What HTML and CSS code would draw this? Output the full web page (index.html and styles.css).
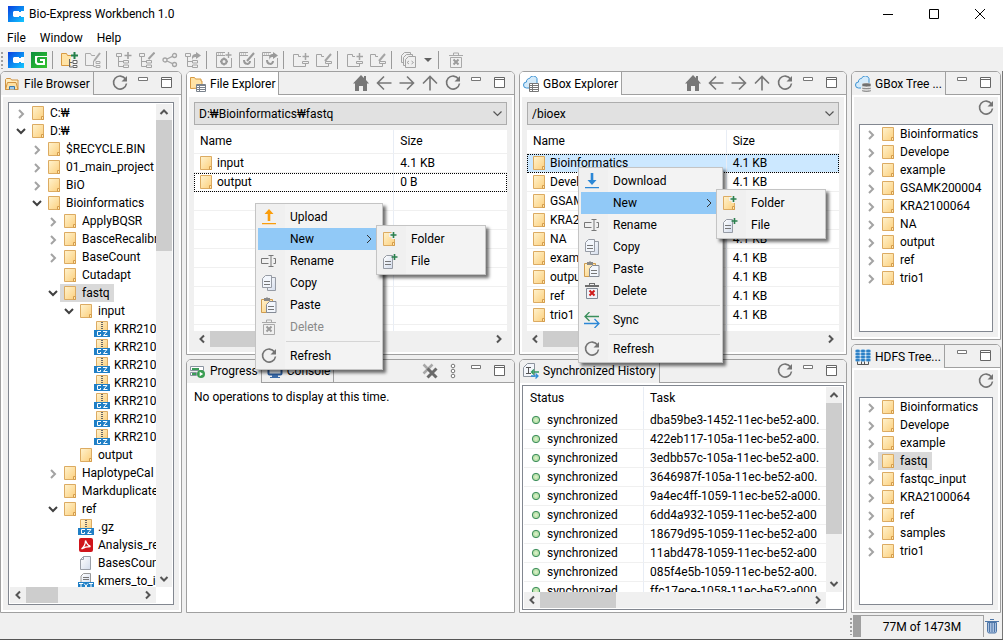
FILE: index.html
```html
<!DOCTYPE html>
<html lang="en">
<head>
<meta charset="utf-8">
<title>Bio-Express Workbench 1.0</title>
<link rel="stylesheet" href="styles.css">
</head>
<body>
<svg class="sprite" aria-hidden="true">
  <defs>
    <linearGradient id="g-fold" x1="0" y1="0" x2="1" y2="1"><stop offset="0" stop-color="#fff3cf"/><stop offset="1" stop-color="#fccf7c"/></linearGradient>
    <linearGradient id="g-blue" x1="0" y1="0" x2="1" y2="1"><stop offset="0" stop-color="#0b3fe0"/><stop offset="0.5" stop-color="#0a86f0"/><stop offset="1" stop-color="#14c8ff"/></linearGradient>
    <linearGradient id="g-green" x1="0" y1="0" x2="1" y2="1"><stop offset="0" stop-color="#0b8f3c"/><stop offset="1" stop-color="#35c52f"/></linearGradient>
    <linearGradient id="g-page" x1="0" y1="0" x2="1" y2="1"><stop offset="0" stop-color="#ffffff"/><stop offset="1" stop-color="#d3dcec"/></linearGradient>
    <radialGradient id="g-dot"><stop offset="0" stop-color="#e4f5d0"/><stop offset="1" stop-color="#9fd394"/></radialGradient>
  </defs>
  <symbol id="i-c" viewBox="0 0 16 16"><path fill="#fff" d="M0 0h16v16H0z"/><path fill="url(#g-blue)" d="M0 0h16v5h-3v1h-2V5H6L5 6v4l1 1h5v-1h2v1h3v5H0z"/></symbol>
  <symbol id="i-g" viewBox="0 0 16 16"><path fill="url(#g-green)" d="M0 0h16v16H0z"/><path fill="#fff" d="M4 4h12v1H7L6 6v4l1 1h5V9H9V7h5v6H6l-2-2z"/></symbol>
  <symbol id="i-folder" viewBox="0 0 16 16"><path fill="url(#g-fold)" stroke="#dcab62" d="M2.500 1.500h11v13h-11z"/><path fill="#ffe6ae" stroke="#d49c4c" d="M11.500 11.500h2v3h-2z"/></symbol>
  <symbol id="i-gz" viewBox="0 0 16 16"><path fill="url(#g-fold)" stroke="#dcab62" d="M2.500.5h11v10h-11z"/><path stroke="#666" stroke-width="2" stroke-dasharray="1 1" d="M8 1v8"/><path fill="#1f7fc6" d="M0 9h16v7H0z"/><path fill="none" stroke="#fff" d="M7 10.500H3.500v4H6.500V13M9 10.500h4l-3.500 4h4"/></symbol>
  <symbol id="i-txt" viewBox="0 0 16 16"><path fill="url(#g-page)" stroke="#999" d="M5.500.5h7v12h-9.500v-9.500z"/><path stroke="#777" d="M5 4.500h6M5 6.500h6"/><path fill="#1f7fc6" d="M0 9h16v7H0z"/><path fill="none" stroke="#fff" d="M1 10.500h4M3 10.500v5M6 10.500l4 5M10 10.500l-4 5M11 10.500h4M13 10.500v5"/></symbol>
  <symbol id="i-pdf" viewBox="0 0 16 16"><rect x="1" y="1" width="14" height="14" rx="2" fill="#d0151b"/><path fill="none" stroke="#fff" stroke-width="1.300" d="M7.500 3.500c1.500 4 2.500 5 5 6-3 0-6 .5-9 2.500 2.500-2 4-5 4-8.500z"/></symbol>
  <symbol id="i-doc" viewBox="0 0 16 16"><path fill="url(#g-page)" stroke="#9a9fa8" d="M5.500 1.500h7v13h-10v-10z"/><path fill="none" stroke="#9a9fa8" d="M5.500 1.500v3h-3"/></symbol>
  <symbol id="i-right" viewBox="0 0 16 16"><path fill="none" stroke="#a3a3a3" stroke-width="2" d="M7 5l4 4-4 4"/></symbol>
  <symbol id="i-down" viewBox="0 0 16 16"><path fill="none" stroke="#404040" stroke-width="2" d="M5 6l4 4 4-4"/></symbol>
  <symbol id="i-browser" viewBox="0 0 16 16"><path fill="#ffedc0" stroke="#cf9240" d="M1.500 13.500v-10l1-1h4l1 1.500h6.500v9.500z"/><path fill="#ffe0a0" stroke="#cf9240" d="M1.500 13.500l2-7H12l2 7z"/><path fill="#9cc8ec" stroke="#3c78a8" d="M5.500 13.500v-3h5v3"/></symbol>
  <symbol id="i-explorer" viewBox="0 0 16 16"><path fill="#ffe3a6" stroke="#d89a42" d="M.5 12.500v-11h4l1 1.500h5.500v2h1v7z"/><path fill="#fff" stroke="#7a828c" d="M6.500 8.500h9v7h-9z"/><path stroke="#7a828c" d="M6 9.500h10M6 11.500h10M6 13.500h10M9.500 8v8"/></symbol>
  <symbol id="i-cloud" viewBox="0 0 16 16"><path fill="#d4ebfb" stroke="#3d92d2" d="M6 12H3.500a3 3 0 0 1 0-6 3 3 0 0 1 3-3.500 4 4 0 0 1 7.500 0v5"/></symbol>
  <symbol id="i-cloudgrid" viewBox="0 0 16 16"><use href="#i-cloud"/><path fill="#fff" stroke="#777" d="M6.500 7.500h9v8h-9z"/><path stroke="#777" d="M6 9.500h10M6 11.500h10M6 13.500h10M9.500 8v8"/></symbol>
  <symbol id="i-clouddb" viewBox="0 0 16 16"><use href="#i-cloud"/><path fill="#707070" stroke="#eee" stroke-width=".6" d="M7 8c0-1.400 9-1.400 9 0v2c0 1.200-9 1.200-9 0zM7 11c0 1.200 9 1.200 9 0v1.500c0 1.300-9 1.300-9 0zM7 13.500c0 1.200 9 1.200 9 0V15c0 1.300-9 1.300-9 0z"/></symbol>
  <symbol id="i-hdfs" viewBox="0 0 16 16"><g fill="#2c7fc4" stroke="#8fc3ec" stroke-width=".5"><ellipse cx="2.700" cy="2" rx="2.500" ry="1.600"/><ellipse cx="8" cy="2" rx="2.500" ry="1.600"/><ellipse cx="13.300" cy="2" rx="2.500" ry="1.600"/><ellipse cx="2.700" cy="5" rx="2.500" ry="1.600"/><ellipse cx="8" cy="5" rx="2.500" ry="1.600"/><ellipse cx="13.300" cy="5" rx="2.500" ry="1.600"/><ellipse cx="2.700" cy="8" rx="2.500" ry="1.600"/><ellipse cx="8" cy="8" rx="2.500" ry="1.600"/><ellipse cx="13.300" cy="8" rx="2.500" ry="1.600"/><ellipse cx="2.700" cy="11" rx="2.500" ry="1.600"/><ellipse cx="8" cy="11" rx="2.500" ry="1.600"/><ellipse cx="13.300" cy="11" rx="2.500" ry="1.600"/></g><path fill="none" stroke="#555" d="M2.500 12.500v3h11v-3M6.500 12.500v3M9.500 12.500v3"/></symbol>
  <symbol id="i-history" viewBox="0 0 16 16"><path fill="#f3f6fb" stroke="#8b929c" d="M4.500.5h7v13h-11V4.500z"/><path fill="none" stroke="#555" d="M3 4.500h5M5.500 5v5M3 10.500h5"/><path fill="none" stroke="#2f9a60" stroke-width="1.300" d="M16 9H8.500M11 6.500L8.500 9 11 11.500"/><path fill="none" stroke="#2f8fd8" stroke-width="1.300" d="M8 13h7M12.500 10.500L15 13l-2.500 2.500"/></symbol>
  <symbol id="i-progress" viewBox="0 0 16 16"><path fill="#fff" stroke="#8a94a0" d="M.5 3.500h13v4H.5zM.5 9.500h6v3h-6z"/><path fill="#3d9c5a" d="M2 5h7v2H2zM2 10h4v2H2z"/><circle cx="11" cy="11" r="4" fill="#3a9d52"/><path fill="#fff" d="M9.700 8.800l3.500 2.200-3.500 2.200z"/></symbol>
  <symbol id="i-console" viewBox="0 0 16 16"><rect x="1.500" y="2.500" width="13" height="9" rx="1" fill="#e8f1fb" stroke="#2c5c9c" stroke-width="2"/><path fill="#3b6ba8" d="M5 12h6v2H5zM3 14h10v1H3z"/></symbol>
  <symbol id="i-refresh" viewBox="0 0 16 16"><path fill="none" stroke="#747474" stroke-width="1.600" d="M13.500 4A6.500 6.500 0 1 0 14.500 8.500"/><path fill="#747474" d="M15 1v5.500H9.500z"/></symbol>
  <symbol id="i-min" viewBox="0 0 16 16"><path fill="#fff" stroke="#777" d="M3.500 2.500h9v3h-9z"/></symbol>
  <symbol id="i-max" viewBox="0 0 16 16"><path fill="#fff" stroke="#666" d="M3.500 2.500h10v10h-10zM3 4.500h11"/></symbol>
  <symbol id="i-home" viewBox="0 0 16 16"><path fill="#777" d="M8 0l3 3V1h2v4l3 3.500h-2V16h-4v-5H6v5H2V8.500H0z"/></symbol>
  <symbol id="i-aleft" viewBox="0 0 16 16"><path fill="none" stroke="#777" stroke-width="1.600" d="M15.500 8H1.500M8 1.500L1.500 8 8 14.500"/></symbol>
  <symbol id="i-aright" viewBox="0 0 16 16"><path fill="none" stroke="#777" stroke-width="1.600" d="M.5 8h14M8 1.500L14.500 8 8 14.500"/></symbol>
  <symbol id="i-aup" viewBox="0 0 16 16"><path fill="none" stroke="#777" stroke-width="1.600" d="M8 15.500v-14M1 8.500l7-7 7 7"/></symbol>
  <symbol id="i-clear" viewBox="0 0 16 16"><path stroke="#a8a8a8" stroke-width="2.500" d="M1.500 1.500l9 9M10.500 1.500l-9 9"/><path stroke="#6a6a6a" stroke-width="3" d="M5.500 5.500l9 9M14.500 5.500l-9 9"/></symbol>
  <symbol id="i-dots" viewBox="0 0 16 16"><g fill="#fff" stroke="#777"><circle cx="8" cy="3" r="1.800"/><circle cx="8" cy="8" r="1.800"/><circle cx="8" cy="13" r="1.800"/></g></symbol>
  <symbol id="i-upload" viewBox="0 0 16 16"><path fill="#fa9d0c" d="M8 0l4.500 5H9.300v7H6.700V5H3.500zM1 14h14v1.200H1z"/></symbol>
  <symbol id="i-download" viewBox="0 0 16 16"><path fill="#2b87d6" d="M8 12L3.500 7h3.200V0h2.600v7h3.200zM1 14h14v1.200H1z"/></symbol>
  <symbol id="i-rename" viewBox="0 0 16 16"><path fill="none" stroke="#777" d="M7.500 5.500h-7v5h7M12.500 5.500h2v5h-2M10 2.500v11M7.500 2.500h5M7.500 13.500h5"/></symbol>
  <symbol id="i-copy" viewBox="0 0 16 16"><path fill="url(#g-page)" stroke="#969ba4" d="M6.500 2.500h8v13h-8z"/><path fill="#f2f6fc" stroke="#969ba4" d="M4.500.5h6v12h-9v-9z"/><path stroke="#777" d="M3 6.500h6M3 9.500h6"/></symbol>
  <symbol id="i-paste" viewBox="0 0 16 16"><path fill="url(#g-fold)" stroke="#cf9c4f" d="M.5 2.500h11v13H.5z"/><path fill="#888" d="M3 1h2l1-1 1 1h2v3H3z"/><path fill="#f2f6fc" stroke="#858b96" d="M8.500 4.500h6.500v11H5.500v-8z"/><path stroke="#777" d="M7 9.500h6M7 12.500h6"/></symbol>
  <symbol id="i-bin" viewBox="0 0 16 16"><path fill="#f0f3f8" stroke="#818995" d="M2.500 5.500h11v10h-11z"/><path fill="#6e6e6e" d="M1 2h4V0h6v2h4v2H1zM6 1v1h4V1z" fill-rule="evenodd"/></symbol>
  <symbol id="i-delete" viewBox="0 0 16 16"><use href="#i-bin"/><path stroke="#d01c1c" stroke-width="2" d="M5.500 7.500l5 5M10.500 7.500l-5 5"/></symbol>
  <symbol id="i-deleteoff" viewBox="0 0 16 16"><path fill="none" stroke="#a9a9a9" d="M2.500 5.500h11v10h-11zM1 3.500h14M5.500 3V1h5v2"/><path stroke="#9b9b9b" stroke-width="2" d="M5.500 7.500l5 5M10.500 7.500l-5 5"/></symbol>
  <symbol id="i-sync" viewBox="0 0 16 16"><path fill="none" stroke="#3b8f5c" stroke-width="1.300" d="M15 4.500H1M5.500 0L1 4.500 5.500 9"/><path fill="none" stroke="#2b87d6" stroke-width="1.300" d="M0 11.500h15M10.500 7L15 11.500 10.500 16"/></symbol>
  <symbol id="i-newfolder" viewBox="0 0 16 16"><path fill="url(#g-fold)" stroke="#dcab62" d="M1.500 1.500h11v13h-11z"/><path fill="#ffe6ae" stroke="#d49c4c" d="M10.500 11.500h2v3h-2z"/><path stroke="#f0f0f0" stroke-width="4" d="M11.500 0v8M7 4h9"/><path stroke="#2a7f4d" stroke-width="1.600" d="M11.500 1v6M8.500 4h6"/></symbol>
  <symbol id="i-newfile" viewBox="0 0 16 16"><path fill="url(#g-page)" stroke="#969ba4" d="M4.500 2.500h6v13h-9v-10z"/><path stroke="#777" d="M3 8.500h6M3 11.500h6"/><path stroke="#2a7f4d" stroke-width="1.600" d="M12.500 1v6M9.500 4h6"/></symbol>
  <symbol id="t-newproj" viewBox="0 0 18 18"><path fill="#ffe3a6" stroke="#d89a42" d="M.5 14.500v-12h5l1 2H11M.5 14.500h9"/><path fill="#ffe3a6" stroke="none" d="M1 5h9v9H1z"/><path stroke="#24804a" stroke-width="2" d="M13.500 1v7M10 4.500h7"/><path fill="none" stroke="#666" d="M8.500 8v8h3M8.500 11.500h3"/><path fill="#fff" stroke="#666" d="M12 9.500h4v3h-4zM12 14.500h4v2h-4z"/></symbol>
  <symbol id="t-editproj" viewBox="0 0 18 18"><g fill="none" stroke="#aaa"><path d="M9 14.500H1.500v-12h5l1 2H11"/><path stroke-width="2" d="M16 2l-6 8"/><path d="M12 10.500h4v2h-4zM12 14.500h4v2h-4zM9.500 10v5.500h2"/></g></symbol>
  <symbol id="t-tree" viewBox="0 0 16 16"><g fill="none" stroke="#a4a4a4"><path d="M.5 1.500h5v3h-5zM2.500 5v9.500h5M2.500 9.500h5M7.500 8.500h5v2.500h-5zM7.500 13h5v2.500h-5z"/></g></symbol>
  <symbol id="t-treeadd" viewBox="0 0 16 16"><use href="#t-tree"/><path stroke="#a0a0a0" stroke-width="1.600" d="M12 0v7M8.500 3.500h7"/></symbol>
  <symbol id="t-treeedit" viewBox="0 0 16 16"><use href="#t-tree"/><path stroke="#a0a0a0" stroke-width="2" d="M15.500.5l-6 6.500"/></symbol>
  <symbol id="t-treerun" viewBox="0 0 16 16"><use href="#t-tree"/><path fill="#a0a0a0" d="M11 0l5 3.500L11 7V5C8 5 7.500 6 7.500 8 6 4 8 2 11 2z"/></symbol>
  <symbol id="t-share" viewBox="0 0 16 16"><g fill="none" stroke="#a4a4a4" stroke-width="1.300"><circle cx="3" cy="8" r="2"/><circle cx="12.500" cy="3.500" r="2"/><circle cx="12.500" cy="12.500" r="2"/><path d="M5 7l6-2.800M5 9l6 2.800"/></g></symbol>
  <symbol id="t-win" viewBox="0 0 16 16"><path fill="none" stroke="#a4a4a4" d="M9 .5H.5v15h15V6M0 3.500h9"/><path stroke="#a4a4a4" stroke-dasharray="1 1" d="M2 2h5"/></symbol>
  <symbol id="t-winadd" viewBox="0 0 16 16"><use href="#t-win"/><path stroke="#a4a4a4" stroke-width="1.300" d="M12.500 0v6M9.500 3h6"/><circle cx="8" cy="9.500" r="2.500" fill="none" stroke="#999" stroke-width="2"/><path stroke="#999" stroke-width="1.500" d="M8 5.500v1.500M8 12v1.500M4 9.500h1.500M10.500 9.500H12"/></symbol>
  <symbol id="t-winedit" viewBox="0 0 16 16"><use href="#t-win"/><path stroke="#999" stroke-width="2" d="M15 1L8 9"/><path fill="none" stroke="#999" stroke-width="2" d="M5 8c0 5 6 5 6 1"/></symbol>
  <symbol id="t-winrun" viewBox="0 0 16 16"><use href="#t-win"/><path fill="#999" d="M11 0l5 3.500L11 7V5C8 5 8 6 8 8 6 4 8 2 11 2z"/><path fill="none" stroke="#999" stroke-width="2" d="M5 8c0 5 6 5 6 1"/></symbol>
  <symbol id="t-fold" viewBox="0 0 16 16"><path fill="none" stroke="#a4a4a4" d="M8 4.500H5.500v-2h-5v12h12V12M9.500 9.500h6v2h-6z"/></symbol>
  <symbol id="t-foldadd" viewBox="0 0 16 16"><use href="#t-fold"/><path stroke="#a4a4a4" stroke-width="1.500" d="M12.500 1v7M9.500 4.500h6.500"/></symbol>
  <symbol id="t-foldedit" viewBox="0 0 16 16"><use href="#t-fold"/><path stroke="#a4a4a4" stroke-width="2" d="M15 2L9 9"/></symbol>
  <symbol id="t-codes" viewBox="0 0 16 16"><g fill="#efefef" stroke="#a4a4a4"><path d="M3.500.5h6v10h-9v-7z"/><path d="M5.500 2.500h6v11h-9v-8z"/><path d="M7.500 4.500h7v11h-10v-8z"/></g><path fill="none" stroke="#a4a4a4" d="M8 9l-2 1.500 2 1.500M10.500 9l2 1.500-2 1.500"/></symbol>
  <symbol id="i-gc" viewBox="0 0 16 16"><path fill="#a9c0df" stroke="#4f77a8" d="M3.500 4.500h9v9l-1 1.500h-7l-1-1.500z"/><path stroke="#4f77a8" d="M1 3.500h14M6 1.500h4M5.500 5v9M8 5v9M10.500 5v9"/></symbol>
  <symbol id="i-ok" viewBox="0 0 16 16"><circle cx="8" cy="8" r="3.700" fill="url(#g-dot)" stroke="#3f8f5f"/></symbol>
  <symbol id="s-l" viewBox="0 0 16 16"><path fill="none" stroke="#555" stroke-width="2" d="M10 4.500L6.500 8l3.500 3.500"/></symbol>
  <symbol id="s-r" viewBox="0 0 16 16"><path fill="none" stroke="#555" stroke-width="2" d="M6 4.500L9.500 8 6 11.500"/></symbol>
  <symbol id="s-u" viewBox="0 0 16 16"><path fill="none" stroke="#555" stroke-width="2" d="M4.500 10L8 6.500l3.500 3.500"/></symbol>
  <symbol id="s-d" viewBox="0 0 16 16"><path fill="none" stroke="#555" stroke-width="2" d="M4.500 6L8 9.500 11.500 6"/></symbol>
</svg>

<header class="titlebar">
  <svg class="icon"><use href="#i-c"/></svg>
  <h1 class="title">Bio-Express Workbench 1.0</h1>
  <button class="win" aria-label="Minimize"><svg viewBox="0 0 12 12"><path d="M1 6.500h10"/></svg></button>
  <button class="win" aria-label="Maximize"><svg viewBox="0 0 12 12"><path d="M1.500 1.500h9v9h-9z"/></svg></button>
  <button class="win" aria-label="Close"><svg viewBox="0 0 12 12"><path d="M1 1l10 10M11 1L1 11"/></svg></button>
</header>
<nav class="menubar"><button>File</button><button>Window</button><button>Help</button></nav>
<div class="toolbar" role="toolbar">
  <span class="grip"></span>
  <button aria-label="CLOSHA"><svg><use href="#i-c"/></svg></button>
  <button aria-label="GBox"><svg><use href="#i-g"/></svg></button>
  <span class="sep"></span>
  <button class="big" aria-label="New project"><svg><use href="#t-newproj"/></svg></button>
  <button class="big" aria-label="Edit project"><svg><use href="#t-editproj"/></svg></button>
  <span class="sep"></span>
  <button aria-label="New pipeline"><svg><use href="#t-treeadd"/></svg></button>
  <button aria-label="Edit pipeline"><svg><use href="#t-treeedit"/></svg></button>
  <button aria-label="Share"><svg><use href="#t-share"/></svg></button>
  <button aria-label="Run pipeline"><svg><use href="#t-treerun"/></svg></button>
  <span class="sep"></span>
  <button aria-label="New program"><svg><use href="#t-winadd"/></svg></button>
  <button aria-label="Edit program"><svg><use href="#t-winedit"/></svg></button>
  <button aria-label="Export program"><svg><use href="#t-winrun"/></svg></button>
  <span class="sep"></span>
  <button aria-label="New category"><svg><use href="#t-foldadd"/></svg></button>
  <button aria-label="Edit category"><svg><use href="#t-foldedit"/></svg></button>
  <span class="sep"></span>
  <button aria-label="New group"><svg><use href="#t-foldadd"/></svg></button>
  <button aria-label="Edit group"><svg><use href="#t-foldedit"/></svg></button>
  <span class="sep"></span>
  <button aria-label="Scripts"><svg><use href="#t-codes"/></svg></button>
  <button class="drop" aria-label="More scripts"><svg viewBox="0 0 8 4"><path fill="#606060" d="M0 0h8L4 4z"/></svg></button>
  <span class="sep"></span>
  <button aria-label="Delete"><svg><use href="#i-deleteoff"/></svg></button>
</div>

<main class="workspace">
  <div class="column">
    <section class="panel">
      <header class="bar">
        <div class="tab"><svg class="icon"><use href="#i-browser"/></svg>File Browser</div>
        <div class="tools"><button aria-label="Refresh"><svg><use href="#i-refresh"/></svg></button><button aria-label="Minimize"><svg><use href="#i-min"/></svg></button><button aria-label="Maximize"><svg><use href="#i-max"/></svg></button></div>
      </header>
      <div class="body">
        <div class="frame scroller">
          <ul class="tree">
            <li><div class="row"><svg class="tog"><use href="#i-right"/></svg><span class="node"><svg class="icon"><use href="#i-folder"/></svg>C:₩</span></div></li>
            <li><div class="row"><svg class="tog"><use href="#i-down"/></svg><span class="node"><svg class="icon"><use href="#i-folder"/></svg>D:₩</span></div>
              <ul>
                <li><div class="row"><svg class="tog"><use href="#i-right"/></svg><span class="node"><svg class="icon"><use href="#i-folder"/></svg>$RECYCLE.BIN</span></div></li>
                <li><div class="row"><svg class="tog"><use href="#i-right"/></svg><span class="node"><svg class="icon"><use href="#i-folder"/></svg>01_main_project</span></div></li>
                <li><div class="row"><svg class="tog"><use href="#i-right"/></svg><span class="node"><svg class="icon"><use href="#i-folder"/></svg>BiO</span></div></li>
                <li><div class="row"><svg class="tog"><use href="#i-down"/></svg><span class="node"><svg class="icon"><use href="#i-folder"/></svg>Bioinformatics</span></div>
                  <ul>
                    <li><div class="row"><svg class="tog"><use href="#i-right"/></svg><span class="node"><svg class="icon"><use href="#i-folder"/></svg>ApplyBQSR</span></div></li>
                    <li><div class="row"><svg class="tog"><use href="#i-right"/></svg><span class="node"><svg class="icon"><use href="#i-folder"/></svg>BasceRecalibra</span></div></li>
                    <li><div class="row"><svg class="tog"><use href="#i-right"/></svg><span class="node"><svg class="icon"><use href="#i-folder"/></svg>BaseCount</span></div></li>
                    <li><div class="row"><span class="tog"></span><span class="node"><svg class="icon"><use href="#i-folder"/></svg>Cutadapt</span></div></li>
                    <li><div class="row"><svg class="tog"><use href="#i-down"/></svg><span class="node selected"><svg class="icon"><use href="#i-folder"/></svg>fastq</span></div>
                      <ul>
                        <li><div class="row"><svg class="tog"><use href="#i-down"/></svg><span class="node"><svg class="icon"><use href="#i-folder"/></svg>input</span></div>
                          <ul>
                            <li><div class="row"><span class="tog"></span><span class="node"><svg class="icon"><use href="#i-gz"/></svg>KRR210</span></div></li>
                            <li><div class="row"><span class="tog"></span><span class="node"><svg class="icon"><use href="#i-gz"/></svg>KRR210</span></div></li>
                            <li><div class="row"><span class="tog"></span><span class="node"><svg class="icon"><use href="#i-gz"/></svg>KRR210</span></div></li>
                            <li><div class="row"><span class="tog"></span><span class="node"><svg class="icon"><use href="#i-gz"/></svg>KRR210</span></div></li>
                            <li><div class="row"><span class="tog"></span><span class="node"><svg class="icon"><use href="#i-gz"/></svg>KRR210</span></div></li>
                            <li><div class="row"><span class="tog"></span><span class="node"><svg class="icon"><use href="#i-gz"/></svg>KRR210</span></div></li>
                            <li><div class="row"><span class="tog"></span><span class="node"><svg class="icon"><use href="#i-gz"/></svg>KRR210</span></div></li>
                          </ul>
                        </li>
                        <li><div class="row"><span class="tog"></span><span class="node"><svg class="icon"><use href="#i-folder"/></svg>output</span></div></li>
                      </ul>
                    </li>
                    <li><div class="row"><svg class="tog"><use href="#i-right"/></svg><span class="node"><svg class="icon"><use href="#i-folder"/></svg>HaplotypeCal</span></div></li>
                    <li><div class="row"><span class="tog"></span><span class="node"><svg class="icon"><use href="#i-folder"/></svg>Markduplicate</span></div></li>
                    <li><div class="row"><svg class="tog"><use href="#i-down"/></svg><span class="node"><svg class="icon"><use href="#i-folder"/></svg>ref</span></div>
                      <ul>
                        <li><div class="row"><span class="tog"></span><span class="node"><svg class="icon"><use href="#i-gz"/></svg>.gz</span></div></li>
                        <li><div class="row"><span class="tog"></span><span class="node"><svg class="icon"><use href="#i-pdf"/></svg>Analysis_re</span></div></li>
                        <li><div class="row"><span class="tog"></span><span class="node"><svg class="icon"><use href="#i-doc"/></svg>BasesCoun</span></div></li>
                        <li><div class="row"><span class="tog"></span><span class="node"><svg class="icon"><use href="#i-txt"/></svg>kmers_to_ig</span></div></li>
                      </ul>
                    </li>
                  </ul>
                </li>
              </ul>
            </li>
          </ul>
          <div class="vbar"><svg><use href="#s-u"/></svg><span class="track"><span class="thumb t-tree"></span></span><svg><use href="#s-d"/></svg></div>
          <div class="hbar"><svg><use href="#s-l"/></svg><span class="track"><span class="thumb t-quarter"></span></span><svg><use href="#s-r"/></svg></div>
        </div>
      </div>
    </section>
  </div>

  <div class="column">
    <section class="panel upper">
      <header class="bar">
        <div class="tab active"><svg class="icon"><use href="#i-explorer"/></svg>File Explorer</div>
        <div class="tools"><button aria-label="Home"><svg><use href="#i-home"/></svg></button><button aria-label="Back"><svg><use href="#i-aleft"/></svg></button><button aria-label="Forward"><svg><use href="#i-aright"/></svg></button><button aria-label="Up"><svg><use href="#i-aup"/></svg></button><button aria-label="Refresh"><svg><use href="#i-refresh"/></svg></button><button aria-label="Minimize"><svg><use href="#i-min"/></svg></button><button aria-label="Maximize"><svg><use href="#i-max"/></svg></button></div>
      </header>
      <div class="body">
        <select class="path" aria-label="Local path"><option>D:₩Bioinformatics₩fastq</option></select>
        <div class="grid">
          <div class="view">
            <table class="files">
              <thead><tr><th class="name">Name</th><th>Size</th></tr></thead>
              <tbody>
                <tr><td><span class="cell"><svg class="icon"><use href="#i-folder"/></svg>input</span></td><td>4.1 KB</td></tr>
                <tr class="focus"><td><span class="cell"><svg class="icon"><use href="#i-folder"/></svg>output</span></td><td>0 B</td></tr>
                <tr><td></td><td></td></tr><tr><td></td><td></td></tr><tr><td></td><td></td></tr><tr><td></td><td></td></tr><tr><td></td><td></td></tr><tr><td></td><td></td></tr><tr><td></td><td></td></tr><tr><td></td><td></td></tr>
              </tbody>
            </table>
          </div>
          <div class="hbar"><svg><use href="#s-l"/></svg><span class="track"><span class="thumb t-wide"></span></span><svg><use href="#s-r"/></svg></div>
        </div>
      </div>
      <div class="menu menu-local" role="menu">
        <button role="menuitem"><svg class="icon"><use href="#i-upload"/></svg>Upload</button>
        <button role="menuitem" class="open">New<svg class="more" viewBox="0 0 6 10"><path d="M1 1l4 4-4 4"/></svg></button>
        <button role="menuitem"><svg class="icon"><use href="#i-rename"/></svg>Rename</button>
        <button role="menuitem"><svg class="icon"><use href="#i-copy"/></svg>Copy</button>
        <button role="menuitem"><svg class="icon"><use href="#i-paste"/></svg>Paste</button>
        <button role="menuitem" disabled><svg class="icon"><use href="#i-deleteoff"/></svg>Delete</button>
        <hr>
        <button role="menuitem"><svg class="icon"><use href="#i-refresh"/></svg>Refresh</button>
        <div class="menu submenu" role="menu">
          <button role="menuitem"><svg class="icon"><use href="#i-newfolder"/></svg>Folder</button>
          <button role="menuitem"><svg class="icon"><use href="#i-newfile"/></svg>File</button>
        </div>
      </div>
    </section>
    <section class="panel lower">
      <header class="bar">
        <div class="tab"><svg class="icon"><use href="#i-progress"/></svg>Progress</div>
        <div class="tab back"><svg class="icon"><use href="#i-console"/></svg>Console</div>
        <div class="tools"><button aria-label="Clear finished"><svg><use href="#i-clear"/></svg></button><button aria-label="View menu"><svg><use href="#i-dots"/></svg></button><button aria-label="Minimize"><svg><use href="#i-min"/></svg></button><button aria-label="Maximize"><svg><use href="#i-max"/></svg></button></div>
      </header>
      <p class="empty">No operations to display at this time.</p>
    </section>
  </div>

  <div class="column">
    <section class="panel upper">
      <header class="bar">
        <div class="tab active"><svg class="icon"><use href="#i-cloudgrid"/></svg>GBox Explorer</div>
        <div class="tools"><button aria-label="Home"><svg><use href="#i-home"/></svg></button><button aria-label="Back"><svg><use href="#i-aleft"/></svg></button><button aria-label="Forward"><svg><use href="#i-aright"/></svg></button><button aria-label="Up"><svg><use href="#i-aup"/></svg></button><button aria-label="Refresh"><svg><use href="#i-refresh"/></svg></button><button aria-label="Minimize"><svg><use href="#i-min"/></svg></button><button aria-label="Maximize"><svg><use href="#i-max"/></svg></button></div>
      </header>
      <div class="body">
        <select class="path" aria-label="GBox path"><option>/bioex</option></select>
        <div class="grid">
          <div class="view">
            <table class="files">
              <thead><tr><th class="name">Name</th><th>Size</th></tr></thead>
              <tbody>
                <tr class="focus chosen"><td><span class="cell"><svg class="icon"><use href="#i-folder"/></svg>Bioinformatics</span></td><td>4.1 KB</td></tr>
                <tr><td><span class="cell"><svg class="icon"><use href="#i-folder"/></svg>Develope</span></td><td>4.1 KB</td></tr>
                <tr><td><span class="cell"><svg class="icon"><use href="#i-folder"/></svg>GSAMK200004</span></td><td>4.1 KB</td></tr>
                <tr><td><span class="cell"><svg class="icon"><use href="#i-folder"/></svg>KRA2100064</span></td><td>4.1 KB</td></tr>
                <tr><td><span class="cell"><svg class="icon"><use href="#i-folder"/></svg>NA</span></td><td>4.1 KB</td></tr>
                <tr><td><span class="cell"><svg class="icon"><use href="#i-folder"/></svg>example</span></td><td>4.1 KB</td></tr>
                <tr><td><span class="cell"><svg class="icon"><use href="#i-folder"/></svg>output</span></td><td>4.1 KB</td></tr>
                <tr><td><span class="cell"><svg class="icon"><use href="#i-folder"/></svg>ref</span></td><td>4.1 KB</td></tr>
                <tr><td><span class="cell"><svg class="icon"><use href="#i-folder"/></svg>trio1</span></td><td>4.1 KB</td></tr>
                <tr><td></td><td></td></tr>
              </tbody>
            </table>
          </div>
          <div class="hbar"><svg><use href="#s-l"/></svg><span class="track"><span class="thumb t-wide"></span></span><svg><use href="#s-r"/></svg></div>
        </div>
      </div>
      <div class="menu menu-remote" role="menu">
        <button role="menuitem"><svg class="icon"><use href="#i-download"/></svg>Download</button>
        <button role="menuitem" class="open">New<svg class="more" viewBox="0 0 6 10"><path d="M1 1l4 4-4 4"/></svg></button>
        <button role="menuitem"><svg class="icon"><use href="#i-rename"/></svg>Rename</button>
        <button role="menuitem"><svg class="icon"><use href="#i-copy"/></svg>Copy</button>
        <button role="menuitem"><svg class="icon"><use href="#i-paste"/></svg>Paste</button>
        <button role="menuitem"><svg class="icon"><use href="#i-delete"/></svg>Delete</button>
        <hr>
        <button role="menuitem"><svg class="icon"><use href="#i-sync"/></svg>Sync</button>
        <hr>
        <button role="menuitem"><svg class="icon"><use href="#i-refresh"/></svg>Refresh</button>
        <div class="menu submenu" role="menu">
          <button role="menuitem"><svg class="icon"><use href="#i-newfolder"/></svg>Folder</button>
          <button role="menuitem"><svg class="icon"><use href="#i-newfile"/></svg>File</button>
        </div>
      </div>
    </section>
    <section class="panel lower">
      <header class="bar">
        <div class="tab"><svg class="icon"><use href="#i-history"/></svg>Synchronized History</div>
        <div class="tools"><button aria-label="Refresh"><svg><use href="#i-refresh"/></svg></button><button aria-label="Minimize"><svg><use href="#i-min"/></svg></button><button aria-label="Maximize"><svg><use href="#i-max"/></svg></button></div>
      </header>
      <div class="body flush">
        <div class="frame scroller">
          <div class="view">
            <table class="files history">
              <thead><tr><th class="status">Status</th><th>Task</th></tr></thead>
              <tbody>
                <tr><td><span class="cell"><svg class="icon"><use href="#i-ok"/></svg>synchronized</span></td><td>dba59be3-1452-11ec-be52-a00.</td></tr>
                <tr><td><span class="cell"><svg class="icon"><use href="#i-ok"/></svg>synchronized</span></td><td>422eb117-105a-11ec-be52-a00.</td></tr>
                <tr><td><span class="cell"><svg class="icon"><use href="#i-ok"/></svg>synchronized</span></td><td>3edbb57c-105a-11ec-be52-a00.</td></tr>
                <tr><td><span class="cell"><svg class="icon"><use href="#i-ok"/></svg>synchronized</span></td><td>3646987f-105a-11ec-be52-a00.</td></tr>
                <tr><td><span class="cell"><svg class="icon"><use href="#i-ok"/></svg>synchronized</span></td><td>9a4ec4ff-1059-11ec-be52-a000.</td></tr>
                <tr><td><span class="cell"><svg class="icon"><use href="#i-ok"/></svg>synchronized</span></td><td>6dd4a932-1059-11ec-be52-a00</td></tr>
                <tr><td><span class="cell"><svg class="icon"><use href="#i-ok"/></svg>synchronized</span></td><td>18679d95-1059-11ec-be52-a00</td></tr>
                <tr><td><span class="cell"><svg class="icon"><use href="#i-ok"/></svg>synchronized</span></td><td>11abd478-1059-11ec-be52-a00</td></tr>
                <tr><td><span class="cell"><svg class="icon"><use href="#i-ok"/></svg>synchronized</span></td><td>085f4e5b-1059-11ec-be52-a00.</td></tr>
                <tr><td><span class="cell"><svg class="icon"><use href="#i-ok"/></svg>synchronized</span></td><td>ffc17ece-1058-11ec-be52-a000</td></tr>
              </tbody>
            </table>
          </div>
          <div class="vbar"><svg><use href="#s-u"/></svg><span class="track"><span class="thumb t-history"></span></span><svg><use href="#s-d"/></svg></div>
          <div class="hbar"><svg><use href="#s-l"/></svg><span class="track"><span class="thumb t-quarter"></span></span><svg><use href="#s-r"/></svg></div>
        </div>
      </div>
    </section>
  </div>

  <div class="column even">
    <section class="panel">
      <header class="bar">
        <div class="tab"><svg class="icon"><use href="#i-clouddb"/></svg>GBox Tree ...</div>
        <div class="tools"><button aria-label="Minimize"><svg><use href="#i-min"/></svg></button><button aria-label="Maximize"><svg><use href="#i-max"/></svg></button></div>
      </header>
      <div class="body with-tools">
        <div class="subbar"><button aria-label="Refresh"><svg><use href="#i-refresh"/></svg></button></div>
        <div class="frame">
          <ul class="tree">
            <li><div class="row"><svg class="tog"><use href="#i-right"/></svg><span class="node"><svg class="icon"><use href="#i-folder"/></svg>Bioinformatics</span></div></li>
            <li><div class="row"><svg class="tog"><use href="#i-right"/></svg><span class="node"><svg class="icon"><use href="#i-folder"/></svg>Develope</span></div></li>
            <li><div class="row"><svg class="tog"><use href="#i-right"/></svg><span class="node"><svg class="icon"><use href="#i-folder"/></svg>example</span></div></li>
            <li><div class="row"><svg class="tog"><use href="#i-right"/></svg><span class="node"><svg class="icon"><use href="#i-folder"/></svg>GSAMK200004</span></div></li>
            <li><div class="row"><svg class="tog"><use href="#i-right"/></svg><span class="node"><svg class="icon"><use href="#i-folder"/></svg>KRA2100064</span></div></li>
            <li><div class="row"><svg class="tog"><use href="#i-right"/></svg><span class="node"><svg class="icon"><use href="#i-folder"/></svg>NA</span></div></li>
            <li><div class="row"><svg class="tog"><use href="#i-right"/></svg><span class="node"><svg class="icon"><use href="#i-folder"/></svg>output</span></div></li>
            <li><div class="row"><svg class="tog"><use href="#i-right"/></svg><span class="node"><svg class="icon"><use href="#i-folder"/></svg>ref</span></div></li>
            <li><div class="row"><svg class="tog"><use href="#i-right"/></svg><span class="node"><svg class="icon"><use href="#i-folder"/></svg>trio1</span></div></li>
          </ul>
        </div>
      </div>
    </section>
    <section class="panel">
      <header class="bar">
        <div class="tab"><svg class="icon"><use href="#i-hdfs"/></svg>HDFS Tree...</div>
        <div class="tools"><button aria-label="Minimize"><svg><use href="#i-min"/></svg></button><button aria-label="Maximize"><svg><use href="#i-max"/></svg></button></div>
      </header>
      <div class="body with-tools">
        <div class="subbar"><button aria-label="Refresh"><svg><use href="#i-refresh"/></svg></button></div>
        <div class="frame">
          <ul class="tree">
            <li><div class="row"><svg class="tog"><use href="#i-right"/></svg><span class="node"><svg class="icon"><use href="#i-folder"/></svg>Bioinformatics</span></div></li>
            <li><div class="row"><svg class="tog"><use href="#i-right"/></svg><span class="node"><svg class="icon"><use href="#i-folder"/></svg>Develope</span></div></li>
            <li><div class="row"><svg class="tog"><use href="#i-right"/></svg><span class="node"><svg class="icon"><use href="#i-folder"/></svg>example</span></div></li>
            <li><div class="row"><svg class="tog"><use href="#i-right"/></svg><span class="node selected"><svg class="icon"><use href="#i-folder"/></svg>fastq</span></div></li>
            <li><div class="row"><svg class="tog"><use href="#i-right"/></svg><span class="node"><svg class="icon"><use href="#i-folder"/></svg>fastqc_input</span></div></li>
            <li><div class="row"><svg class="tog"><use href="#i-right"/></svg><span class="node"><svg class="icon"><use href="#i-folder"/></svg>KRA2100064</span></div></li>
            <li><div class="row"><svg class="tog"><use href="#i-right"/></svg><span class="node"><svg class="icon"><use href="#i-folder"/></svg>ref</span></div></li>
            <li><div class="row"><svg class="tog"><use href="#i-right"/></svg><span class="node"><svg class="icon"><use href="#i-folder"/></svg>samples</span></div></li>
            <li><div class="row"><svg class="tog"><use href="#i-right"/></svg><span class="node"><svg class="icon"><use href="#i-folder"/></svg>trio1</span></div></li>
          </ul>
        </div>
      </div>
    </section>
  </div>
</main>

<footer class="statusbar">
  <span class="grip"></span>
  <div class="heap"><span class="used"></span><span class="amount">77M of 1473M</span></div>
  <button aria-label="Run garbage collector"><svg><use href="#i-gc"/></svg></button>
</footer>
</body>
</html>
```
FILE: styles.css
```css
* { box-sizing: border-box; }
html, body { height: 100%; margin: 0; }
body {
  display: flex;
  flex-direction: column;
  overflow: hidden;
  background: #f0f0f0;
  color: #000;
  font: 12px/18px Roboto, "Noto Sans CJK KR", sans-serif;
  border-bottom: 1px solid #555;
}
.sprite { position: absolute; width: 0; height: 0; }
svg { display: block; flex: none; }
button {
  font: inherit;
  color: inherit;
  background: none;
  border: 0;
  margin: 0;
  padding: 0;
}
.icon { width: 16px; height: 16px; }

/* window chrome */
.titlebar {
  display: flex;
  align-items: center;
  height: 27px;
  padding-left: 8px;
  background: #fff;
}
.title { flex: 1; margin: 0 0 0 5px; font-size: 12px; font-weight: 400; }
.win { display: flex; justify-content: center; width: 46px; }
.win svg { width: 12px; height: 12px; fill: none; stroke: #000; }
.menubar { display: flex; gap: 14px; height: 20px; padding-left: 7px; background: #fff; line-height: 22px; }
.toolbar { display: flex; align-items: center; height: 24px; padding-top: 2px; }
.toolbar button { display: flex; justify-content: center; width: 23px; }
.toolbar svg { width: 16px; height: 16px; }
.toolbar .big svg { width: 18px; height: 18px; }
.toolbar .drop { width: 16px; }
.toolbar .drop svg { width: 8px; height: 4px; }
.grip { width: 2px; height: 17px; margin: 0 1px; background: repeating-linear-gradient(#a0a0a0 0 2px, transparent 2px 4px); }
.sep { width: 1px; height: 18px; margin: 0 5px 0 2px; background: #9a9a9a; }

/* panels */
.workspace {
  flex: 1;
  min-height: 0;
  display: grid;
  grid-template-columns: 182fr 329fr 328fr 150fr;
  grid-template-rows: minmax(0, 1fr);
  gap: 4px;
  padding-right: 1px;
  border-right: 1px solid #777;
}
.column { display: flex; flex-direction: column; gap: 4px; min-width: 0; min-height: 0; }
.panel {
  position: relative;
  flex: 1 1 0;
  min-height: 0;
  display: flex;
  flex-direction: column;
  background: #fff;
  border: 1px solid #a0a0a0;
  border-radius: 5px 5px 0 0;
}
.panel.upper { flex-grow: 284; z-index: 1; }
.panel.lower { flex-grow: 254; }
.bar { display: flex; height: 23px; background: #f0f0f0; border-radius: 4px 4px 0 0; }
.tab { display: flex; align-items: center; gap: 4px; padding: 0 3px; border-right: 1px solid #a0a0a0; white-space: nowrap; }
.tab.active { background: #fff; border-radius: 4px 0 0; }
.tab.back { padding-left: 5px; border-bottom: 1px solid #a0a0a0; }
.tools { flex: 1; display: flex; justify-content: flex-end; align-items: center; padding-right: 4px; border-bottom: 1px solid #a0a0a0; }
.tools button, .subbar button { display: flex; justify-content: center; width: 23px; }
.tools svg, .subbar svg { width: 16px; height: 16px; }
.body {
  flex: 1;
  min-height: 0;
  display: flex;
  flex-direction: column;
  gap: 5px;
  padding: 5px;
  background: #f0f0f0;
  border: 2px solid #fff;
}
.body.flush { padding: 0; }
.body.with-tools { padding-top: 0; }
.subbar { display: flex; justify-content: flex-end; align-items: center; height: 22px; margin-right: -4px; }
.frame { flex: 1; min-height: 0; background: #fff; border: 1px solid #828790; overflow: hidden; }
.empty { margin: 0; padding: 4px 7px; line-height: 20px; }

/* scroll areas */
.scroller {
  display: grid;
  grid-template: minmax(0, 1fr) 16px / minmax(0, 1fr) 16px;
  padding: 1px;
}
.vbar, .hbar { display: flex; background: #f0f0f0; }
.vbar { flex-direction: column; }
.vbar svg, .hbar svg { width: 16px; height: 16px; }
.track { flex: 1; display: flex; }
.vbar .track { flex-direction: column; }
.thumb { background: #cdcdcd; }
.t-tree { height: 29%; }
.t-history { height: 76%; }
.t-quarter { width: 28%; }
.t-wide { width: 60%; }

/* trees */
.tree, .tree ul { margin: 0; padding: 0; list-style: none; }
.tree { padding-left: 2px; overflow: hidden; min-height: 0; }
.tree ul { padding-left: 16px; }
.row { display: flex; align-items: center; height: 18px; }
.tog { flex: none; width: 16px; height: 16px; }
.node { flex: none; display: flex; align-items: center; gap: 4px; padding: 0 4px 0 2px; white-space: nowrap; }
.selected { background: #d9d9d9; }

/* file tables */
.path {
  appearance: none;
  flex: none;
  height: 23px;
  padding: 0 4px;
  font: inherit;
  color: #000;
  border: 1px solid #adadad;
  border-radius: 0;
  background: #e1e1e1 url("data:image/svg+xml,%3Csvg xmlns='http://www.w3.org/2000/svg' width='9' height='6'%3E%3Cpath d='M.5.5l4 4 4-4' fill='none' stroke='%23555' stroke-width='1.200'/%3E%3C/svg%3E") no-repeat right 4px center;
}
.grid { flex: 1; min-height: 0; display: flex; flex-direction: column; }
.view { flex: 1; min-width: 0; min-height: 0; overflow: hidden; background: #fff; }
.files { width: 100%; table-layout: fixed; border-collapse: separate; border-spacing: 0; }
.files th { height: 24px; padding: 0 6px 1px; font-weight: 400; text-align: left; border-bottom: 1px solid #f0f0f0; }
.files td { height: 19px; padding: 0 6px; line-height: 18px; white-space: nowrap; overflow: hidden; border-bottom: 1px solid #f0f0f0; }
.files th:first-child, .files td:first-child { border-right: 1px solid #e8edf5; }
.files .name { width: 64%; }
.files .status { width: 120px; }
.history th { border-bottom-color: transparent; }
.history td:last-child, .history th:last-child { padding-right: 0; }
.cell { display: flex; align-items: center; gap: 3px; margin-left: -2px; }
.focus { outline: 1px dotted #000; outline-offset: -1px; }
.chosen td { background: #cce8ff; }

/* context menus */
.menu {
  position: absolute;
  z-index: 5;
  padding: 2px;
  background: linear-gradient(90deg, #f0f0f0 29px, #f3f3f3 29px);
  border: 1px solid #c4c4c4;
  box-shadow: 3px 3px 3px rgba(0, 0, 0, .55);
}
.menu button { position: relative; display: flex; align-items: center; width: 100%; height: 22px; padding-left: 32px; text-align: left; }
.menu .icon { position: absolute; left: 3px; }
.menu .open { background: #91c9f7; }
.menu button:disabled { color: #8a8a8a; }
.menu hr { height: 1px; margin: 3px 0 3px 28px; border: 0; background: #d5d5d5; }
.more { width: 6px; height: 10px; margin: 0 8px 0 auto; fill: none; stroke: #333; }
.menu-local { left: 68px; top: 131px; width: 128px; }
.menu-remote { left: 58px; top: 95px; width: 145px; }
.submenu { left: calc(100% - 6px); top: 21px; width: 110px; }

/* status bar */
.statusbar { display: flex; align-items: center; justify-content: flex-end; height: 26px; padding-right: 2px; border-right: 1px solid #777; }
.heap { display: flex; align-items: center; width: 131px; height: 22px; border: 1px solid #a0a0a0; border-width: 1px 1px 0 0; }
.used { width: 8px; height: 100%; background: #a0a0a0; }
.amount { flex: 1; text-align: center; }
.statusbar svg { width: 16px; height: 16px; }
```
